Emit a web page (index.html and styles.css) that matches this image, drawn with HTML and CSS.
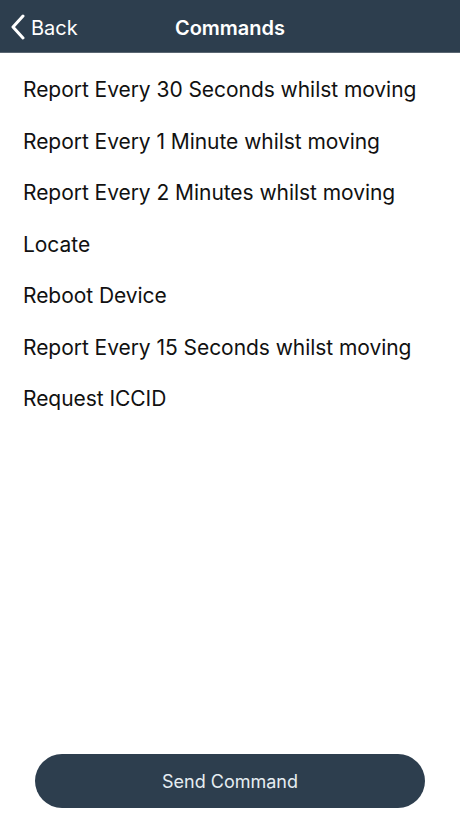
FILE: index.html
```html
<!DOCTYPE html>
<html>
<head>
<meta charset="utf-8">
<link rel="stylesheet" href="styles.css">
</head>
<body>
<div class="app">
  <header class="navbar">
    <div class="back">
      <svg class="chev" width="16" height="26" viewBox="0 0 16 26"><path d="M13 2 L3 13 L13 24" fill="none" stroke="#ffffff" stroke-width="3" stroke-linecap="round" stroke-linejoin="round"/></svg>
      <span class="back-label">Back</span>
    </div>
    <div class="title">Commands</div>
  </header>
  <ul class="list">
    <li class="item">Report Every 30 Seconds whilst moving</li>
    <li class="item">Report Every 1 Minute whilst moving</li>
    <li class="item">Report Every 2 Minutes whilst moving</li>
    <li class="item">Locate</li>
    <li class="item">Reboot Device</li>
    <li class="item">Report Every 15 Seconds whilst moving</li>
    <li class="item">Request ICCID</li>
  </ul>
  <div class="footer">
    <button class="send">Send Command</button>
  </div>
</div>
</body>
</html>
```
FILE: styles.css
```css
html, body {
  margin: 0;
  padding: 0;
  background: #ffffff;
}
body {
  font-family: "Inter", "Liberation Sans", sans-serif;
}
.app {
  width: 460px;
  height: 818px;
  display: flex;
  flex-direction: column;
}
.navbar {
  height: 53px;
  padding-top: 3px;
  background: #2d3e4e;
  display: flex;
  align-items: center;
  justify-content: center;
  position: relative;
  color: #ffffff;
  border-bottom: 1px solid #5a6672;
  box-sizing: border-box;
}
.back {
  position: absolute;
  left: 10px;
  top: 3px;
  height: 49px;
  display: flex;
  align-items: center;
  gap: 5px;
}
.chev {
  display: block;
  margin-top: -1px;
}
.back-label {
  font-size: 20px;
  font-weight: 400;
}
.title {
  font-size: 20px;
  font-weight: 600;
}
.list {
  list-style: none;
  margin: 0;
  padding: 11px 0 0 0;
  flex: 1;
}
.item {
  height: 51.5px;
  display: flex;
  align-items: center;
  padding-left: 23px;
  font-size: 21px;
  letter-spacing: -0.05px;
  color: #111111;
}
.footer {
  display: flex;
  justify-content: center;
  padding-bottom: 10px;
}
.send {
  width: 390px;
  height: 54px;
  border: none;
  border-radius: 27px;
  background: #2d3e4e;
  color: #e6edf2;
  font-family: "Inter", "Liberation Sans", sans-serif;
  font-size: 18px;
  font-weight: 400;
}
```
